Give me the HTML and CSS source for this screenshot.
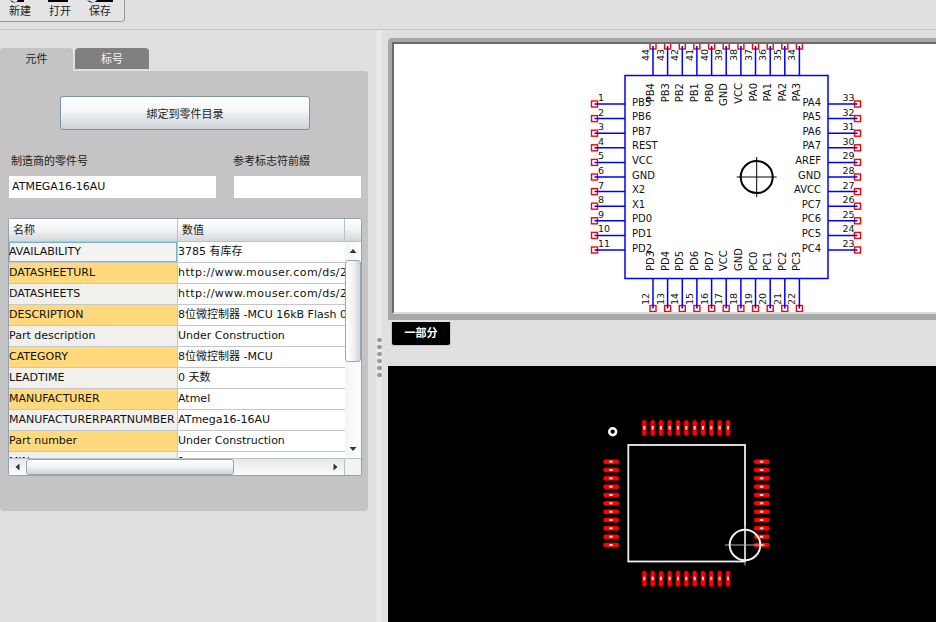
FILE: index.html
```html
<!DOCTYPE html>
<html lang="zh">
<head>
<meta charset="utf-8">
<title>元件</title>
<link rel="stylesheet" href="styles.css">
</head>
<body>
<header class="toolbar">
  <div class="tool-card">
    <div class="tool"><svg class="tool-icon" viewBox="0 0 40 3"><path d="M10 0q1.500 2.500 4 2.500t4-2.500h6v2H14z"/></svg><span>新建</span></div>
    <div class="tool"><svg class="tool-icon" viewBox="0 0 40 3"><path d="M8 0h20v2H8z"/></svg><span>打开</span></div>
    <div class="tool"><svg class="tool-icon" viewBox="0 0 40 3"><path d="M7 0q2 2.500 5 2.500t5-2.500h16v2H12z"/></svg><span>保存</span></div>
  </div>
</header>
<main class="workspace">
  <section class="left-pane">
    <nav class="tabs">
      <div class="tab tab-active">元件</div>
      <div class="tab tab-idle">标号</div>
    </nav>
    <div class="panel">
      <div class="bind-wrap"><button class="bind-btn">綁定到零件目录</button></div>
      <div class="fields">
        <label class="field field-part"><span class="field-label">制造商的零件号</span><span class="field-input">ATMEGA16-16AU</span></label>
        <label class="field field-ref"><span class="field-label">参考标志符前綴</span><span class="field-input"></span></label>
      </div>
      <div class="grid">
        <div class="grid-head">
          <div class="hcell hcell-name">名称</div>
          <div class="hcell hcell-value">数值</div>
          <div class="hcell-end"></div>
        </div>
        <div class="grid-mid">
          <div class="rows">
            <div class="row"><div class="key key-selected">AVAILABILITY</div><div class="val">3785 有库存</div></div>
            <div class="row"><div class="key key-hl">DATASHEETURL</div><div class="val val-url">http://www.mouser.com/ds/2/268/doc2466-1065498.pdf</div></div>
            <div class="row"><div class="key">DATASHEETS</div><div class="val val-url">http://www.mouser.com/ds/2/268/doc2466-1065498.pdf</div></div>
            <div class="row"><div class="key key-hl">DESCRIPTION</div><div class="val">8位微控制器 -MCU 16kB Flash 0.5kB</div></div>
            <div class="row"><div class="key">Part description</div><div class="val">Under Construction</div></div>
            <div class="row"><div class="key key-hl">CATEGORY</div><div class="val">8位微控制器 -MCU</div></div>
            <div class="row"><div class="key">LEADTIME</div><div class="val">0 天数</div></div>
            <div class="row"><div class="key key-hl">MANUFACTURER</div><div class="val">Atmel</div></div>
            <div class="row"><div class="key">MANUFACTURERPARTNUMBER</div><div class="val">ATmega16-16AU</div></div>
            <div class="row"><div class="key key-hl">Part number</div><div class="val">Under Construction</div></div>
            <div class="row"><div class="key">MIN</div><div class="val">1</div></div>
          </div>
          <div class="vscroll">
            <svg class="arrow" viewBox="0 0 16 16"><path d="M4.500 11 8 7l3.500 4z"/></svg>
            <div class="vthumb"></div>
            <div class="vspace"></div>
            <svg class="arrow" viewBox="0 0 16 16"><path d="M4.500 6 8 10l3.500-4z"/></svg>
          </div>
        </div>
        <div class="grid-foot">
          <svg class="harrow" viewBox="0 0 16 16"><path d="M10 4.500 6 8l4 3.500z"/></svg>
          <div class="hthumb"></div>
          <div class="hspace"></div>
          <svg class="harrow" viewBox="0 0 16 16"><path d="M6 4.500 10 8l-4 3.500z"/></svg>
          <div class="corner"></div>
        </div>
      </div>
    </div>
  </section>
  <div class="splitter">
    <div class="grip">
      <i></i><i></i><i></i><i></i><i></i><i></i>
    </div>
  </div>
  <section class="right-pane">
    <div class="frame">
      <div class="sheet">
        <svg class="schematic" viewBox="394 44 542 268" width="542" height="268">
          <defs><rect id="pad" x="-3" y="-3" width="6" height="6"/></defs>
          <g class="pads">
            <use href="#pad" x="653" y="46"/><use href="#pad" x="667.600" y="46"/><use href="#pad" x="682.300" y="46"/><use href="#pad" x="696.900" y="46"/><use href="#pad" x="711.600" y="46"/><use href="#pad" x="726.200" y="46"/><use href="#pad" x="740.900" y="46"/><use href="#pad" x="755.500" y="46"/><use href="#pad" x="770.200" y="46"/><use href="#pad" x="784.800" y="46"/><use href="#pad" x="799.400" y="46"/>
            <use href="#pad" x="653" y="308.500"/><use href="#pad" x="667.600" y="308.500"/><use href="#pad" x="682.300" y="308.500"/><use href="#pad" x="696.900" y="308.500"/><use href="#pad" x="711.600" y="308.500"/><use href="#pad" x="726.200" y="308.500"/><use href="#pad" x="740.900" y="308.500"/><use href="#pad" x="755.500" y="308.500"/><use href="#pad" x="770.200" y="308.500"/><use href="#pad" x="784.800" y="308.500"/><use href="#pad" x="799.400" y="308.500"/>
            <use href="#pad" x="594.500" y="104"/><use href="#pad" x="594.500" y="118.600"/><use href="#pad" x="594.500" y="133.200"/><use href="#pad" x="594.500" y="147.800"/><use href="#pad" x="594.500" y="162.400"/><use href="#pad" x="594.500" y="177"/><use href="#pad" x="594.500" y="191.600"/><use href="#pad" x="594.500" y="206.200"/><use href="#pad" x="594.500" y="220.800"/><use href="#pad" x="594.500" y="235.400"/><use href="#pad" x="594.500" y="250"/>
            <use href="#pad" x="857.500" y="104"/><use href="#pad" x="857.500" y="118.600"/><use href="#pad" x="857.500" y="133.200"/><use href="#pad" x="857.500" y="147.800"/><use href="#pad" x="857.500" y="162.400"/><use href="#pad" x="857.500" y="177"/><use href="#pad" x="857.500" y="191.600"/><use href="#pad" x="857.500" y="206.200"/><use href="#pad" x="857.500" y="220.800"/><use href="#pad" x="857.500" y="235.400"/><use href="#pad" x="857.500" y="250"/>
          </g>
          <path class="wire" d="M653 75V46M667.600 75V46M682.300 75V46M696.900 75V46M711.600 75V46M726.200 75V46M740.900 75V46M755.500 75V46M770.200 75V46M784.800 75V46M799.400 75V46M653 279V308.500M667.600 279V308.500M682.300 279V308.500M696.900 279V308.500M711.600 279V308.500M726.200 279V308.500M740.900 279V308.500M755.500 279V308.500M770.200 279V308.500M784.800 279V308.500M799.400 279V308.500M625 104H594.500M625 118.600H594.500M625 133.200H594.500M625 147.800H594.500M625 162.400H594.500M625 177H594.500M625 191.600H594.500M625 206.200H594.500M625 220.800H594.500M625 235.400H594.500M625 250H594.500M828 104H857.500M828 118.600H857.500M828 133.200H857.500M828 147.800H857.500M828 162.400H857.500M828 177H857.500M828 191.600H857.500M828 206.200H857.500M828 220.800H857.500M828 235.400H857.500M828 250H857.500"/>
          <rect class="wire" x="625" y="75.500" width="203" height="203"/>
          <g class="sym">
            <circle class="cross-ring" cx="756.700" cy="177" r="16"/>
            <path class="cross-line" d="M736.700 177H776.700M756.700 157V197"/>
          </g>
          <g class="lab">
            <text class="num" x="598" y="101">1</text><text class="num" x="598" y="115.600">2</text><text class="num" x="598" y="130.200">3</text><text class="num" x="598" y="144.800">4</text><text class="num" x="598" y="159.400">5</text><text class="num" x="598" y="174">6</text><text class="num" x="598" y="188.600">7</text><text class="num" x="598" y="203.200">8</text><text class="num" x="598" y="217.800">9</text><text class="num" x="598" y="232.400">10</text><text class="num" x="598" y="247">11</text>
            <text x="632" y="105.500">PB5</text><text x="632" y="120">PB6</text><text x="632" y="134.700">PB7</text><text x="632" y="149.300">REST</text><text x="632" y="163.900">VCC</text><text x="632" y="178.500">GND</text><text x="632" y="193">X2</text><text x="632" y="207.700">X1</text><text x="632" y="222.300">PD0</text><text x="632" y="236.900">PD1</text><text x="632" y="251.500">PD2</text>
          </g>
          <g class="lab lab-end">
            <text class="num" x="854.500" y="101">33</text><text class="num" x="854.500" y="115.600">32</text><text class="num" x="854.500" y="130.200">31</text><text class="num" x="854.500" y="144.800">30</text><text class="num" x="854.500" y="159.400">29</text><text class="num" x="854.500" y="174">28</text><text class="num" x="854.500" y="188.600">27</text><text class="num" x="854.500" y="203.200">26</text><text class="num" x="854.500" y="217.800">25</text><text class="num" x="854.500" y="232.400">24</text><text class="num" x="854.500" y="247">23</text>
            <text x="821" y="105.500">PA4</text><text x="821" y="120">PA5</text><text x="821" y="134.700">PA6</text><text x="821" y="149.300">PA7</text><text x="821" y="163.900">AREF</text><text x="821" y="178.500">GND</text><text x="821" y="193">AVCC</text><text x="821" y="207.700">PC7</text><text x="821" y="222.300">PC6</text><text x="821" y="236.900">PC5</text><text x="821" y="251.500">PC4</text>
          </g>
          <g class="lab">
            <text class="num" transform="translate(649 61) rotate(-90)">44</text><text class="num" transform="translate(663.600 61) rotate(-90)">43</text><text class="num" transform="translate(678.300 61) rotate(-90)">42</text><text class="num" transform="translate(692.900 61) rotate(-90)">41</text><text class="num" transform="translate(707.600 61) rotate(-90)">40</text><text class="num" transform="translate(722.200 61) rotate(-90)">39</text><text class="num" transform="translate(736.900 61) rotate(-90)">38</text><text class="num" transform="translate(751.500 61) rotate(-90)">37</text><text class="num" transform="translate(766.200 61) rotate(-90)">36</text><text class="num" transform="translate(780.800 61) rotate(-90)">35</text><text class="num" transform="translate(795.400 61) rotate(-90)">34</text>
            <text class="num" transform="translate(649 305) rotate(-90)">12</text><text class="num" transform="translate(663.600 305) rotate(-90)">13</text><text class="num" transform="translate(678.300 305) rotate(-90)">14</text><text class="num" transform="translate(692.900 305) rotate(-90)">15</text><text class="num" transform="translate(707.600 305) rotate(-90)">16</text><text class="num" transform="translate(722.200 305) rotate(-90)">17</text><text class="num" transform="translate(736.900 305) rotate(-90)">18</text><text class="num" transform="translate(751.500 305) rotate(-90)">19</text><text class="num" transform="translate(766.200 305) rotate(-90)">20</text><text class="num" transform="translate(780.800 305) rotate(-90)">21</text><text class="num" transform="translate(795.400 305) rotate(-90)">22</text>
            <text transform="translate(654 271) rotate(-90)">PD3</text><text transform="translate(668.600 271) rotate(-90)">PD4</text><text transform="translate(683.300 271) rotate(-90)">PD5</text><text transform="translate(697.900 271) rotate(-90)">PD6</text><text transform="translate(712.600 271) rotate(-90)">PD7</text><text transform="translate(727.200 271) rotate(-90)">VCC</text><text transform="translate(741.900 271) rotate(-90)">GND</text><text transform="translate(756.500 271) rotate(-90)">PC0</text><text transform="translate(771.200 271) rotate(-90)">PC1</text><text transform="translate(785.800 271) rotate(-90)">PC2</text><text transform="translate(800.400 271) rotate(-90)">PC3</text>
          </g>
          <g class="lab lab-end">
            <text transform="translate(654 83) rotate(-90)">PB4</text><text transform="translate(668.600 83) rotate(-90)">PB3</text><text transform="translate(683.300 83) rotate(-90)">PB2</text><text transform="translate(697.900 83) rotate(-90)">PB1</text><text transform="translate(712.600 83) rotate(-90)">PB0</text><text transform="translate(727.200 83) rotate(-90)">GND</text><text transform="translate(741.900 83) rotate(-90)">VCC</text><text transform="translate(756.500 83) rotate(-90)">PA0</text><text transform="translate(771.200 83) rotate(-90)">PA1</text><text transform="translate(785.800 83) rotate(-90)">PA2</text><text transform="translate(800.400 83) rotate(-90)">PA3</text>
          </g>
        </svg>
      </div>
    </div>
    <div class="view-tabs"><div class="view-tab">一部分</div></div>
    <div class="board">
      <svg class="pcb" viewBox="388 366 548 256" width="548" height="256">
        <defs>
          <g id="vp"><rect class="copper" x="-2.200" y="-8" width="4.400" height="16" rx="2.200"/><rect class="mark" x="-1" y="-2" width="2" height="3.500"/></g>
          <g id="hp"><rect class="copper" x="-8" y="-2.200" width="16" height="4.400" rx="2.200"/><rect class="mark" x="-2" y="-1" width="3.500" height="2"/></g>
        </defs>
        <use href="#vp" x="644.300" y="428"/><use href="#vp" x="652.700" y="428"/><use href="#vp" x="661" y="428"/><use href="#vp" x="669.700" y="428"/><use href="#vp" x="678" y="428"/><use href="#vp" x="686.300" y="428"/><use href="#vp" x="694.700" y="428"/><use href="#vp" x="703" y="428"/><use href="#vp" x="711.300" y="428"/><use href="#vp" x="719.700" y="428"/><use href="#vp" x="728" y="428"/>
        <use href="#vp" x="644.300" y="578.700"/><use href="#vp" x="652.700" y="578.700"/><use href="#vp" x="661" y="578.700"/><use href="#vp" x="669.700" y="578.700"/><use href="#vp" x="678" y="578.700"/><use href="#vp" x="686.300" y="578.700"/><use href="#vp" x="694.700" y="578.700"/><use href="#vp" x="703" y="578.700"/><use href="#vp" x="711.300" y="578.700"/><use href="#vp" x="719.700" y="578.700"/><use href="#vp" x="728" y="578.700"/>
        <use href="#hp" x="611.200" y="461.700"/><use href="#hp" x="611.200" y="470"/><use href="#hp" x="611.200" y="478.300"/><use href="#hp" x="611.200" y="486.700"/><use href="#hp" x="611.200" y="495"/><use href="#hp" x="611.200" y="503.300"/><use href="#hp" x="611.200" y="511.700"/><use href="#hp" x="611.200" y="520"/><use href="#hp" x="611.200" y="528.300"/><use href="#hp" x="611.200" y="536.700"/><use href="#hp" x="611.200" y="545"/>
        <use href="#hp" x="761.800" y="461.700"/><use href="#hp" x="761.800" y="470"/><use href="#hp" x="761.800" y="478.300"/><use href="#hp" x="761.800" y="486.700"/><use href="#hp" x="761.800" y="495"/><use href="#hp" x="761.800" y="503.300"/><use href="#hp" x="761.800" y="511.700"/><use href="#hp" x="761.800" y="520"/><use href="#hp" x="761.800" y="528.300"/><use href="#hp" x="761.800" y="536.700"/><use href="#hp" x="761.800" y="545"/>
        <rect class="outline" x="628.300" y="445" width="116.700" height="116.500"/>
        <circle class="hole" cx="612.700" cy="431.700" r="3.400"/>
        <path class="pcb-cross" d="M725 545H765M745 525V565.500"/>
        <circle class="pcb-ring" cx="745" cy="545" r="15.300"/>
      </svg>
    </div>
  </section>
</main>
</body>
</html>
```

FILE: styles.css
```css
* { box-sizing: border-box; }

html, body {
  margin: 0;
  height: 622px;
  overflow: hidden;
}

body {
  background: #e0e0e0;
  color: #111;
  font-family: "DejaVu Sans", "Noto Sans CJK SC", sans-serif;
  font-size: 11px;
  display: flex;
  flex-direction: column;
}

.toolbar {
  height: 30px;
  flex: none;
  border-bottom: 1px solid #c6c6c6;
}

.tool-card {
  width: 125px;
  height: 22px;
  display: flex;
  background: #e4e4e4;
  border-right: 1px solid #9a9a9a;
  border-bottom: 1px solid #9a9a9a;
  border-radius: 0 0 4px 0;
}

.tool {
  width: 40px;
  display: flex;
  flex-direction: column;
  align-items: center;
  line-height: 13px;
  font-size: 11px;
  color: #222;
}

.tool-icon {
  width: 40px;
  height: 3px;
  margin-bottom: 2px;
  flex: none;
}

.workspace {
  flex: 1;
  display: flex;
  min-height: 0;
}

.left-pane {
  width: 376px;
  flex: none;
  padding-top: 18px;
}

.tabs {
  display: flex;
  align-items: flex-start;
  gap: 2px;
}

.tab {
  width: 73px;
  text-align: center;
  border-radius: 4px 4px 0 0;
  line-height: 23px;
}

.tab-active {
  height: 25px;
  background: #c4c4c4;
  margin-bottom: -2px;
  color: #222;
}

.tab-idle {
  width: 74px;
  height: 21px;
  line-height: 23px;
  background: #808080;
  color: #f4f4f4;
}

.panel {
  width: 368px;
  height: 440px;
  background: #c4c4c4;
  border-radius: 0 4px 4px 4px;
  padding: 25px 7px 0 8px;
}

.bind-wrap {
  padding-left: 52px;
}

.bind-btn {
  display: block;
  width: 250px;
  height: 34px;
  padding: 0;
  font: inherit;
  color: #222;
  background: linear-gradient(#ffffff 0%, #f6f7f8 40%, #ccd2d7 100%);
  border: 1px solid #7f93a5;
  border-radius: 3px;
}

.fields {
  display: flex;
  margin-top: 24px;
}

.field {
  display: flex;
  flex-direction: column;
}

.field-part {
  width: 226px;
  padding-left: 1px;
}

.field-ref {
  flex: 1;
}

.field-label {
  line-height: 16px;
  padding-left: 2px;
  margin-bottom: 6px;
  color: #222;
}

.field-ref .field-label {
  padding-left: 0;
  margin-left: -1px;
}

.field-part .field-input {
  width: 207px;
}

.field-input {
  height: 22px;
  background: #fff;
  line-height: 22px;
  padding-left: 3px;
  color: #111;
}

.grid {
  width: 354px;
  height: 258px;
  margin-top: 20px;
  background: #fff;
  border: 1px solid #8fa3b0;
  border-radius: 2px;
  display: flex;
  flex-direction: column;
  overflow: hidden;
}

.grid-head {
  height: 23px;
  flex: none;
  display: flex;
  background: linear-gradient(#ffffff 0%, #f3f4f5 45%, #d3d8dc 100%);
  border-bottom: 1px solid #b9c2c8;
}

.hcell {
  line-height: 22px;
  padding: 1px 0 0 4px;
  color: #222;
  border-right: 1px solid #b9c2c8;
}

.hcell-name {
  width: 169px;
}

.hcell-value {
  width: 167px;
}

.hcell-end {
  flex: 1;
}

.grid-mid {
  height: 216px;
  flex: none;
  display: flex;
}

.rows {
  width: 336px;
  overflow: hidden;
  flex: none;
}

.row {
  height: 21px;
  display: flex;
  border-bottom: 1px solid #c3c8cc;
  color: #111;
}

.key {
  width: 168px;
  flex: none;
  line-height: 19px;
  background: #f2f0ec;
  white-space: nowrap;
  overflow: hidden;
}

.key-hl {
  background: #ffd97b;
}

.key-selected {
  background: #f5f3f0;
  box-shadow: inset 0 0 0 1px #70b8cc;
}

.val {
  width: 168px;
  flex: none;
  border-left: 1px solid #c3c8cc;
  line-height: 19px;
  white-space: nowrap;
  overflow: hidden;
  background: #fff;
}

.val-url {
  letter-spacing: 0.450px;
}

.vscroll {
  flex: 1;
  display: flex;
  flex-direction: column;
  background: linear-gradient(90deg, #f4f5f6, #fdfdfe);
  min-width: 0;
}

.arrow {
  width: 16px;
  height: 16px;
  flex: none;
  margin-bottom: 1px;
}

.arrow path,
.harrow path {
  fill: #333;
}

.vthumb {
  height: 102px;
  flex: none;
  margin-top: 1px;
  background: linear-gradient(90deg, #ffffff 0%, #f2f3f5 50%, #cfd5da 100%);
  border: 1px solid #94a6b3;
  border-radius: 3px;
}

.vspace {
  flex: 1;
}

.grid-foot {
  height: 17px;
  flex: none;
  display: flex;
  background: linear-gradient(#e6e9eb, #fbfbfc);
  border-top: 1px solid #b9c2c8;
}

.harrow {
  width: 17px;
  height: 16px;
  flex: none;
}

.hthumb {
  width: 208px;
  flex: none;
  background: linear-gradient(#ffffff 0%, #eff1f3 50%, #cdd3d8 100%);
  border: 1px solid #94a6b3;
  border-radius: 3px;
}

.hspace {
  flex: 1;
}

.corner {
  width: 17px;
  flex: none;
  border-left: 1px solid #b9c2c8;
  background: #f2f3f4;
}

.splitter {
  width: 12px;
  flex: none;
  background: linear-gradient(90deg, #e8e8e8 0, #e8e8e8 6px, #e0e0e0 6px);
  display: flex;
  padding-top: 308px;
  padding-left: 1px;
}

.grip {
  display: flex;
  flex-direction: column;
  gap: 3px;
  width: 6px;
}

.grip i {
  display: block;
  width: 5px;
  height: 4px;
  border-radius: 2px;
  background: #999;
}

.right-pane {
  flex: 1;
  min-width: 0;
  padding-top: 8px;
  display: flex;
  flex-direction: column;
}

.frame {
  height: 282px;
  flex: none;
  background: #a8a8a8;
  padding: 4px 0 6px 4px;
  border-radius: 4px 0 0 0;
}

.sheet {
  height: 272px;
  background: #fff;
  border-top: 2px solid #6a6a6a;
  border-left: 2px solid #6a6a6a;
  border-bottom: 2px solid #dcdcdc;
  overflow: hidden;
}

.schematic {
  display: block;
}

.pads use {
  fill: #fff;
  stroke: #f00;
  stroke-width: 1.400;
}

.wire {
  fill: none;
  stroke: #0000ff;
  stroke-width: 1.500;
}

.cross-ring {
  fill: none;
  stroke: #000;
  stroke-width: 2;
}

.cross-line {
  fill: none;
  stroke: #000;
  stroke-width: 1;
}

.lab text {
  font-family: "DejaVu Sans", sans-serif;
  font-size: 10px;
  fill: #111;
}

.lab .num {
  font-size: 9.500px;
}

.lab-end text {
  text-anchor: end;
}

.view-tabs {
  height: 46px;
  flex: none;
  padding: 2px 0 0 3px;
}

.view-tab {
  width: 60px;
  height: 24px;
  background: #000;
  color: #fff;
  font-weight: 700;
  line-height: 23px;
  text-align: center;
  border-radius: 0 0 3px 3px;
  border: 1px solid #c8c8c8;
  border-top: 0;
}

.board {
  flex: 1;
  background: #000;
  overflow: hidden;
}

.pcb {
  display: block;
}

.copper {
  fill: #f00;
  stroke: #900;
  stroke-width: 0.400;
}

.mark {
  fill: #ffd0d0;
}

.outline {
  fill: none;
  stroke: #f0f0f0;
  stroke-width: 1.800;
}

.hole {
  fill: none;
  stroke: #fff;
  stroke-width: 2.600;
}

.pcb-ring {
  fill: none;
  stroke: #f0f0f0;
  stroke-width: 2;
}

.pcb-cross {
  fill: none;
  stroke: #b0b0b0;
  stroke-width: 1;
}
```
